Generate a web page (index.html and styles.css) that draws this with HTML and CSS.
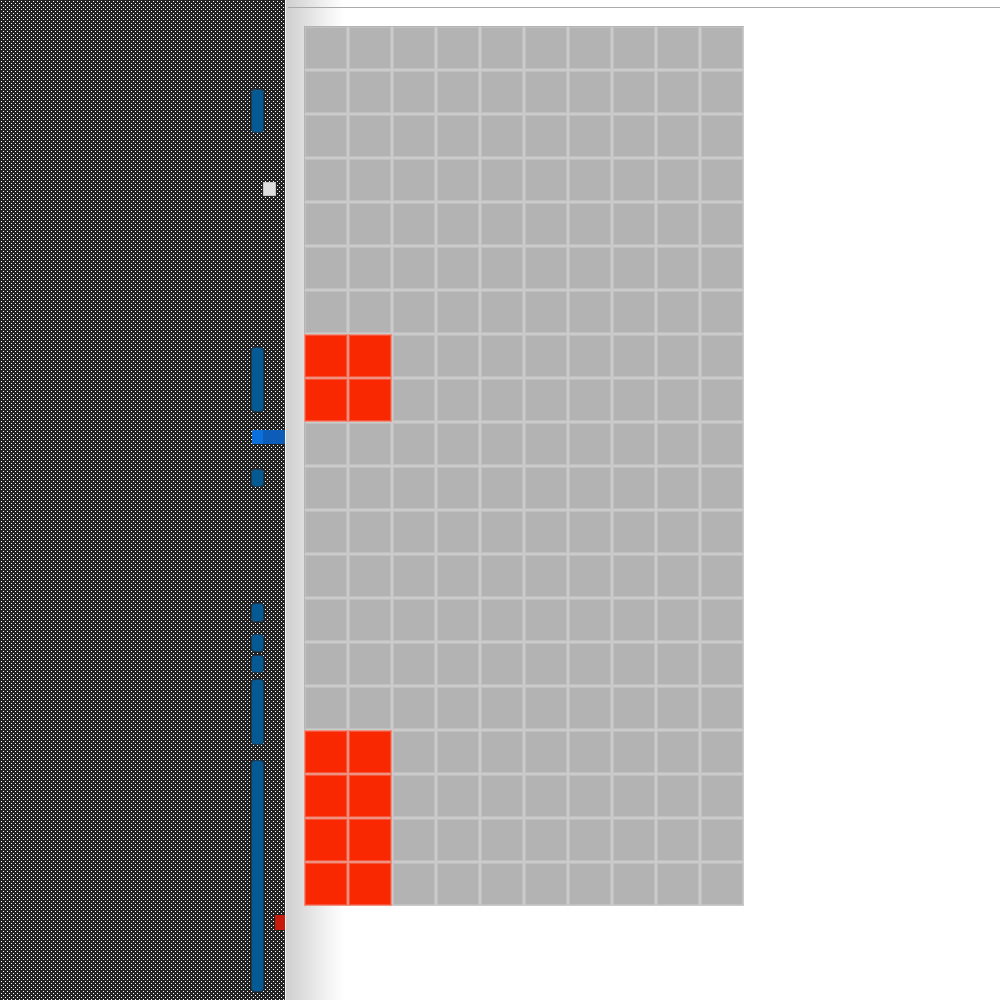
FILE: index.html
```html
<!DOCTYPE html>
<html lang="en">
<head>
    <meta charset="UTF-8">
    <meta name="viewport" content="width=device-width, initial-scale=1.0">
    <title>Board</title>
    <link rel="stylesheet" href="styles.css">
</head>
<body>
    <div class="page">
        <aside class="sidebar">
            <div class="rail">
                <div class="bar bar-1"></div>
                <div class="bar bar-2"></div>
                <div class="bar bar-3"></div>
                <div class="bar bar-4"></div>
                <div class="bar bar-5"></div>
                <div class="bar bar-6"></div>
                <div class="bar bar-7"></div>
                <div class="bar bar-8"></div>
                <div class="thumb"></div>
                <div class="tab"></div>
                <div class="marker"></div>
            </div>
        </aside>
        <main class="main">
            <div class="topline"></div>
            <div class="board">
                <div class="cell"></div><div class="cell"></div><div class="cell"></div><div class="cell"></div><div class="cell"></div><div class="cell"></div><div class="cell"></div><div class="cell"></div><div class="cell"></div><div class="cell"></div>
                <div class="cell"></div><div class="cell"></div><div class="cell"></div><div class="cell"></div><div class="cell"></div><div class="cell"></div><div class="cell"></div><div class="cell"></div><div class="cell"></div><div class="cell"></div>
                <div class="cell"></div><div class="cell"></div><div class="cell"></div><div class="cell"></div><div class="cell"></div><div class="cell"></div><div class="cell"></div><div class="cell"></div><div class="cell"></div><div class="cell"></div>
                <div class="cell"></div><div class="cell"></div><div class="cell"></div><div class="cell"></div><div class="cell"></div><div class="cell"></div><div class="cell"></div><div class="cell"></div><div class="cell"></div><div class="cell"></div>
                <div class="cell"></div><div class="cell"></div><div class="cell"></div><div class="cell"></div><div class="cell"></div><div class="cell"></div><div class="cell"></div><div class="cell"></div><div class="cell"></div><div class="cell"></div>
                <div class="cell"></div><div class="cell"></div><div class="cell"></div><div class="cell"></div><div class="cell"></div><div class="cell"></div><div class="cell"></div><div class="cell"></div><div class="cell"></div><div class="cell"></div>
                <div class="cell"></div><div class="cell"></div><div class="cell"></div><div class="cell"></div><div class="cell"></div><div class="cell"></div><div class="cell"></div><div class="cell"></div><div class="cell"></div><div class="cell"></div>
                <div class="cell red"></div><div class="cell red"></div><div class="cell"></div><div class="cell"></div><div class="cell"></div><div class="cell"></div><div class="cell"></div><div class="cell"></div><div class="cell"></div><div class="cell"></div>
                <div class="cell red"></div><div class="cell red"></div><div class="cell"></div><div class="cell"></div><div class="cell"></div><div class="cell"></div><div class="cell"></div><div class="cell"></div><div class="cell"></div><div class="cell"></div>
                <div class="cell"></div><div class="cell"></div><div class="cell"></div><div class="cell"></div><div class="cell"></div><div class="cell"></div><div class="cell"></div><div class="cell"></div><div class="cell"></div><div class="cell"></div>
                <div class="cell"></div><div class="cell"></div><div class="cell"></div><div class="cell"></div><div class="cell"></div><div class="cell"></div><div class="cell"></div><div class="cell"></div><div class="cell"></div><div class="cell"></div>
                <div class="cell"></div><div class="cell"></div><div class="cell"></div><div class="cell"></div><div class="cell"></div><div class="cell"></div><div class="cell"></div><div class="cell"></div><div class="cell"></div><div class="cell"></div>
                <div class="cell"></div><div class="cell"></div><div class="cell"></div><div class="cell"></div><div class="cell"></div><div class="cell"></div><div class="cell"></div><div class="cell"></div><div class="cell"></div><div class="cell"></div>
                <div class="cell"></div><div class="cell"></div><div class="cell"></div><div class="cell"></div><div class="cell"></div><div class="cell"></div><div class="cell"></div><div class="cell"></div><div class="cell"></div><div class="cell"></div>
                <div class="cell"></div><div class="cell"></div><div class="cell"></div><div class="cell"></div><div class="cell"></div><div class="cell"></div><div class="cell"></div><div class="cell"></div><div class="cell"></div><div class="cell"></div>
                <div class="cell"></div><div class="cell"></div><div class="cell"></div><div class="cell"></div><div class="cell"></div><div class="cell"></div><div class="cell"></div><div class="cell"></div><div class="cell"></div><div class="cell"></div>
                <div class="cell red"></div><div class="cell red"></div><div class="cell"></div><div class="cell"></div><div class="cell"></div><div class="cell"></div><div class="cell"></div><div class="cell"></div><div class="cell"></div><div class="cell"></div>
                <div class="cell red"></div><div class="cell red"></div><div class="cell"></div><div class="cell"></div><div class="cell"></div><div class="cell"></div><div class="cell"></div><div class="cell"></div><div class="cell"></div><div class="cell"></div>
                <div class="cell red"></div><div class="cell red"></div><div class="cell"></div><div class="cell"></div><div class="cell"></div><div class="cell"></div><div class="cell"></div><div class="cell"></div><div class="cell"></div><div class="cell"></div>
                <div class="cell red"></div><div class="cell red"></div><div class="cell"></div><div class="cell"></div><div class="cell"></div><div class="cell"></div><div class="cell"></div><div class="cell"></div><div class="cell"></div><div class="cell"></div>
            </div>
        </main>
    </div>
</body>
</html>
```

FILE: styles.css
```css
body {
    margin: 0;
    background-color: #fff;
    overflow: hidden;
}
.page {
    display: flex;
    height: 1000px;
}
.sidebar {
    display: flex;
    justify-content: flex-end;
    width: 285px;
    flex-shrink: 0;
    background-color: #222;
    background-image:
        radial-gradient(circle at 1.5px 1.5px, #fff 0.7px, transparent 0.8px),
        radial-gradient(circle at 1.5px 1.5px, #fff 0.7px, transparent 0.8px);
    background-size: 4px 4px;
    background-position: 0 0, 2px 2px;
}
.rail {
    position: relative;
    box-sizing: border-box;
    width: 33px;
    border-left: 1px solid #262626;
    border-right: 1px solid #262626;
}
.bar {
    box-sizing: border-box;
    width: 11px;
    margin-left: -1px;
    background-color: #055a94;
    border-radius: 3px;
    box-shadow: 0 0 0 1px #1c3a50;
}
.bar-1 { margin-top: 90px; height: 42px; }
.bar-2 { margin-top: 216px; height: 63px; }
.bar-3 { margin-top: 59px; height: 16px; }
.bar-4 { margin-top: 118px; height: 17px; }
.bar-5 { margin-top: 14px; height: 16px; }
.bar-6 { margin-top: 5px; height: 16px; }
.bar-7 { margin-top: 8px; height: 64px; }
.bar-8 { margin-top: 17px; height: 230px; }
.thumb {
    position: absolute;
    left: 10px;
    top: 182px;
    box-sizing: border-box;
    width: 13px;
    height: 14px;
    background-color: #dedede;
    border: 1px solid #c4c4c4;
}
.tab {
    position: absolute;
    left: -1px;
    top: 430px;
    width: 33px;
    height: 14px;
    background: linear-gradient(90deg, #0b6fdc 11px, #0c5cb8 11px);
}
.marker {
    position: absolute;
    left: 22px;
    top: 915px;
    width: 10px;
    height: 15px;
    background-color: #c81a0a;
}
.main {
    flex: 1;
    border-left: 1px solid #f4f4f4;
    padding-top: 7px;
    background: linear-gradient(90deg, #cfcfcf 0, #dedede 18px, #f0f0f0 38px, #fff 58px);
}
.topline {
    height: 1px;
    margin-left: 2px;
    background-color: #aaa;
}
.board {
    display: grid;
    grid-template-columns: repeat(10, 44px);
    grid-auto-rows: 44px;
    width: 440px;
    margin-top: 18px;
    margin-left: 18px;
}
.cell {
    box-sizing: border-box;
    background-color: #b3b3b3;
    border: 1px solid #cbcbcb;
    box-shadow: inset 0 0 0 1px #c0c0c0;
}
.cell:nth-child(-n+10) {
    border-top-color: #b3b3b3;
}
.cell:nth-child(10n+1) {
    border-left-color: #b3b3b3;
}
.cell.red {
    background-color: #f92800;
    border-color: #f0907e;
    box-shadow: inset 0 0 0 1px #f4553a;
}
```
